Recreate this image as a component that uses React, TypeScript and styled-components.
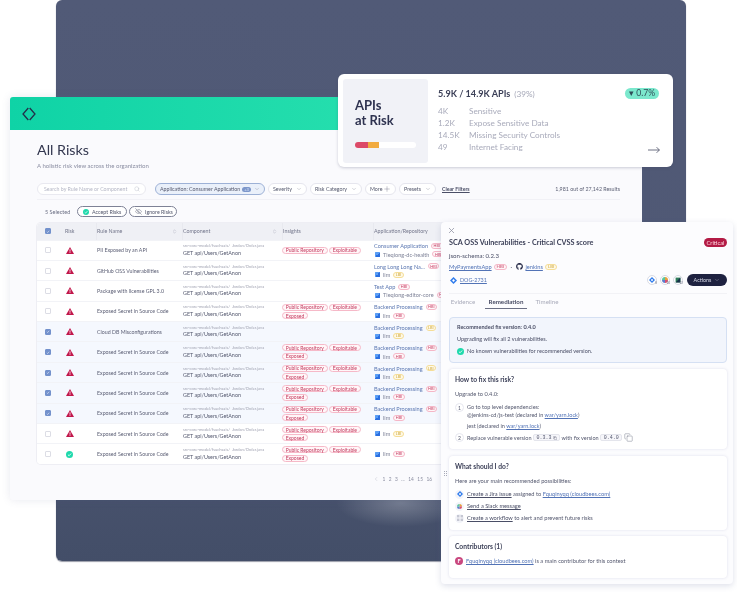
import styled, { createGlobalStyle } from "styled-components";
import { ChevronDown, ChevronLeft, ChevronsUpDown, Copy, EyeOff, Plus, Search, X } from "lucide-react";
import { FaGithub } from "react-icons/fa";

// style
const GlobalStyle = createGlobalStyle`
  html, body { margin: 0; padding: 0; background: #fff; }
  body { font-family: "Lato", "Liberation Sans", sans-serif; color: #3a3e55; }
  * { box-sizing: border-box; }
`;
const Canvas = styled.div`
  position: relative;
  width: 737px;
  height: 592px;
  overflow: hidden;
  background: #fff;
  filter: blur(0.3px);
`;
const Backdrop = styled.div`
  position: absolute;
  left: 56px;
  top: 0;
  width: 630px;
  height: 561px;
  border-radius: 6px;
  background:
    radial-gradient(ellipse 65px 24px at 345px 503px, rgba(255, 255, 255, 0.25), rgba(255, 255, 255, 0)),
    linear-gradient(180deg, #515a77 0%, #4f5874 60%, #434e68 100%);
  box-shadow: 0 1px 1px rgba(50, 55, 80, 0.5);
`;
const RisksWindow = styled.section`
  position: absolute;
  left: 10px;
  top: 97px;
  width: 632px;
  height: 403px;
  background: #fafafd;
  border-radius: 3px;
  box-shadow: 0 0 8px rgba(90, 100, 140, 0.14);
  overflow: hidden;
`;
const TopBand = styled.header`
  height: 33px;
  display: flex;
  align-items: center;
  padding-left: 12px;
  background: linear-gradient(90deg, #0fd3a6 0%, #38e8b4 100%);
`;
const RisksBody = styled.div`
  padding: 0 22px 0 27px;
`;
const PageTitle = styled.h1`
  margin: 10px 0 0;
  font-size: 14.3px;
  line-height: 20px;
  font-weight: 400;
  color: #33374f;
`;
const PageSub = styled.p`
  margin: 2px 0 0;
  font-size: 6.05px;
  line-height: 8px;
  color: #8c8fa3;
`;
const FilterRow = styled.div`
  display: flex;
  align-items: center;
  gap: 3px;
  margin-top: 13px;
  padding-bottom: 4px;
  border-bottom: 1px solid #f1f1f6;
  height: 17px;
`;
const SearchBox = styled.div`
  width: 109px;
  height: 12px;
  margin-right: 6px;
  padding: 0 5px 0 6px;
  display: flex;
  align-items: center;
  justify-content: space-between;
  border: 1px solid #e9e9f0;
  border-radius: 6px;
  background: #fff;
  font-size: 5.25px;
  color: #b4b6c5;
`;
const Chip = styled.div<{ $active?: boolean; $w: number }>`
  width: ${(p) => p.$w}px;
  height: 12px;
  padding: 0 4px 0 4px;
  display: flex;
  align-items: center;
  justify-content: space-between;
  border-radius: 6px;
  border: 1px solid ${(p) => (p.$active ? "#9db1d6" : "#e6e6ee")};
  background: ${(p) => (p.$active ? "#eaf0fa" : "#fff")};
  font-size: 5.3px;
  color: #55596e;
  white-space: nowrap;
`;
const CountPill = styled.span`
  padding: 0 2px;
  margin-left: 2px;
  border-radius: 3px;
  background: #7d97cb;
  color: #dfe8f7;
  font-size: 4px;
  line-height: 5px;
`;
const ClearLink = styled.a`
  margin-left: 3px;
  font-size: 5.2px;
  font-weight: 700;
  color: #4a4e66;
  text-decoration: underline;
`;
const ResultCount = styled.span`
  margin-left: auto;
  font-size: 5.3px;
  color: #5b5f74;
`;
const SelectionRow = styled.div`
  display: flex;
  align-items: center;
  height: 11px;
  margin-top: 6px;
  padding-left: 8px;
  gap: 2px;
`;
const SelectedLabel = styled.span`
  width: 30px;
  font-size: 5.5px;
  color: #6b6f84;
`;
const ActionChip = styled.div<{ $w: number }>`
  width: ${(p) => p.$w}px;
  height: 11px;
  display: flex;
  align-items: center;
  gap: 3px;
  padding-left: 5px;
  border: 1px solid #7e8296;
  border-radius: 6px;
  font-size: 5.3px;
  color: #53576d;
  background: #fff;
`;
const Table = styled.div`
  margin-top: 5.5px;
  border-radius: 4px;
  box-shadow: 0 0 0 1px #eeeef4;
  background: #fff;
  overflow: hidden;
`;
const HeaderRow = styled.div`
  display: grid;
  grid-template-columns: 28px 32px 86px 100px 91px 1fr;
  align-items: center;
  height: 17px;
  background: #eff0f5;
  border-radius: 4px 4px 0 0;
  font-size: 5.3px;
  color: #74778c;
`;
const HeaderCell = styled.div<{ $sep?: boolean }>`
  display: flex;
  align-items: center;
  justify-content: space-between;
  height: 100%;
  padding: 0 5px 0 0;
  ${(p) => p.$sep && "border-right: 1px solid #e8e9ef;"}
`;
const Row = styled.div<{ $checked: boolean }>`
  display: grid;
  grid-template-columns: 28px 32px 86px 100px 91px 1fr;
  align-items: center;
  height: 20.4px;
  border-top: 1px solid #f2f3f7;
  background: ${(p) => (p.$checked ? "#f5f8fe" : "#fff")};
`;
const BoxCell = styled.div`
  display: flex;
  padding-left: 8px;
`;
const RiskCell = styled.div`
  display: flex;
  padding-left: 1px;
`;
const CheckBox = styled.span<{ $checked: boolean }>`
  width: 6px;
  height: 6px;
  border-radius: 1px;
  display: flex;
  align-items: center;
  justify-content: center;
  border: 1px solid ${(p) => (p.$checked ? "#7391cc" : "#dcdde5")};
  background: ${(p) => (p.$checked ? "#7391cc" : "#fff")};
`;
const RuleName = styled.div`
  font-size: 5.25px;
  color: #5d6076;
  white-space: nowrap;
`;
const ComponentPath = styled.div`
  font-size: 4.1px;
  line-height: 6.5px;
  color: #a2a4b3;
  white-space: nowrap;
`;
const ComponentApi = styled.div`
  font-size: 5.4px;
  line-height: 7.5px;
  color: #54586e;
`;
const TagWrap = styled.div`
  display: flex;
  flex-wrap: wrap;
  gap: 1.4px;
  margin-left: -1px;
  padding-right: 8px;
`;
const Tag = styled.span`
  height: 7px;
  padding: 0 2.7px;
  display: flex;
  align-items: center;
  border: 0.7px solid #f6b9c8;
  border-radius: 4px;
  background: #fff6f8;
  color: #c43a5e;
  font-size: 5px;
  white-space: nowrap;
`;
const AppCell = styled.div`
  display: flex;
  flex-direction: column;
  gap: 1px;
  min-width: 0;
`;
const AppLine = styled.div`
  display: flex;
  align-items: center;
  gap: 3px;
  font-size: 5.6px;
  line-height: 7.5px;
  color: #5c78b2;
  white-space: nowrap;
`;
const RepoLine = styled(AppLine)`
  padding-left: 1px;
  color: #7f8398;
`;
const RepoIcon = styled.span`
  width: 5px;
  height: 5px;
  border-radius: 0.5px;
  background: linear-gradient(135deg, #5a9df4 50%, #2b6fe0 50%);
`;
const Level = styled.span<{ $low?: boolean; $size?: number }>`
  height: 6px;
  padding: 0 1.5px;
  display: flex;
  align-items: center;
  border-radius: 3px;
  border: 0.7px solid ${(p) => (p.$low ? "#f5dd97" : "#f5b7c7")};
  background: ${(p) => (p.$low ? "#fff9e6" : "#fff6f8")};
  color: ${(p) => (p.$low ? "#cda63a" : "#c43a5e")};
  font-size: ${(p) => p.$size ?? 3.8}px;
`;
const Pager = styled.div`
  display: flex;
  justify-content: flex-end;
  gap: 3.5px;
  align-items: center;
  height: 10px;
  margin-top: 10px;
  padding-right: 188px;
  font-size: 4.8px;
  color: #8a8da0;
`;

const ApiCard = styled.section`
  position: absolute;
  left: 338px;
  top: 74px;
  width: 335px;
  height: 93px;
  padding: 5px;
  display: flex;
  gap: 10px;
  border-radius: 6px;
  background: #fff;
  box-shadow: 0 1px 3px rgba(60, 65, 95, 0.25);
`;
const ApiTile = styled.div`
  width: 85px;
  height: 84px;
  padding: 19px 12px 0;
  display: flex;
  flex-direction: column;
  border-radius: 3px;
  background: #f1f2f7;
`;
const ApiTileTitle = styled.div`
  font-size: 13px;
  line-height: 15px;
  font-weight: 700;
  color: #2f3350;
`;
const RiskBar = styled.div`
  display: flex;
  height: 6px;
  width: 61px;
  margin-top: 14px;
  border-radius: 3px;
  overflow: hidden;
  background: #fff;
`;
const RiskPart = styled.span<{ $c: string; $w: number }>`
  width: ${(p) => p.$w}px;
  background: ${(p) => p.$c};
`;
const ApiMain = styled.div`
  flex: 1;
  padding: 8px 9px 0 0;
  position: relative;
`;
const ApiHead = styled.div`
  display: flex;
  align-items: center;
  justify-content: space-between;
  height: 12px;
`;
const ApiHeadline = styled.div`
  font-size: 9.1px;
  font-weight: 700;
  color: #3b3f57;
  b {
    margin-left: 4px;
    font-weight: 400;
    color: #a6a8b8;
    font-size: 8.2px;
  }
`;
const TrendBadge = styled.div`
  width: 34px;
  display: flex;
  align-items: center;
  justify-content: center;
  gap: 2px;
  height: 11px;
  border-radius: 5.5px;
  background: #7be8cd;
  color: #2f4d58;
  font-size: 8.6px;
`;
const ApiList = styled.div`
  margin-top: 6.5px;
  display: grid;
  grid-template-columns: 31px 1fr;
  grid-auto-rows: 11.8px;
  align-items: center;
  font-size: 8.2px;
  color: #a9abbb;
`;
const ApiArrow = styled.div`
  position: absolute;
  right: 8px;
  bottom: 8px;
  display: flex;
`;

const DetailPanel = styled.aside`
  position: absolute;
  left: 441px;
  top: 222px;
  width: 292px;
  height: 362px;
  padding: 3px 6px 0 8px;
  border-radius: 4px;
  background: #fcfcfe;
  box-shadow: 0 2px 6px rgba(90, 100, 150, 0.2);
`;
const CloseButton = styled.div`
  display: flex;
  margin-left: -2px;
  color: #8f91a2;
  height: 11px;
  align-items: center;
`;
const TitleRow = styled.div`
  display: flex;
  align-items: center;
  justify-content: space-between;
  height: 11px;
  margin-top: 1px;
`;
const DetailTitle = styled.h2`
  margin: 0;
  font-size: 7.25px;
  font-weight: 700;
  color: #3b3f57;
`;
const Severity = styled.span`
  height: 9px;
  width: 23px;
  display: flex;
  align-items: center;
  justify-content: center;
  border-radius: 4.5px;
  background: #b31b45;
  color: #ffd8e2;
  font-size: 5.8px;
`;
const Meta = styled.div`
  margin-top: 2.5px;
  font-size: 6.1px;
  line-height: 9px;
  color: #4a4e66;
`;
const LinkRow = styled.div`
  margin-top: 2px;
  display: flex;
  align-items: center;
  gap: 2.5px;
  height: 10px;
  font-size: 5.7px;
  color: #4a4e66;
`;
const TextLink = styled.a`
  color: #5273b6;
  text-decoration: underline;
`;
const IssueRow = styled.div`
  display: flex;
  align-items: center;
  justify-content: space-between;
  height: 13px;
  margin-top: 2px;
`;
const IssueLink = styled.div`
  display: flex;
  align-items: center;
  gap: 3px;
  padding-left: 1px;
  font-size: 5.4px;
`;
const IssueTools = styled.div`
  display: flex;
  align-items: center;
  gap: 3px;
`;
const ToolBadge = styled.span`
  position: relative;
  width: 10px;
  height: 10px;
  display: flex;
  align-items: center;
  justify-content: center;
  border-radius: 50%;
  border: 0.7px solid #d9dbe4;
  background: #fff;
`;
const ToolCount = styled.span`
  position: absolute;
  right: -1px;
  bottom: -1px;
  font-size: 3px;
  line-height: 3px;
  color: #6b6f84;
`;
const ActionsButton = styled.div`
  width: 40px;
  height: 12px;
  margin-left: 1px;
  display: flex;
  align-items: center;
  justify-content: center;
  gap: 3px;
  border-radius: 6px;
  background: #1e2240;
  color: #d9dbe8;
  font-size: 5.4px;
`;
const Tabs = styled.nav`
  margin-top: 6px;
  padding-top: 3px;
  display: flex;
  border-top: 1px solid #f2f2f6;
  height: 16px;
`;
const TabItem = styled.div<{ $active?: boolean; $w: number }>`
  width: ${(p) => p.$w}px;
  margin-right: 8px;
  text-align: center;
  font-size: 6.2px;
  line-height: 10px;
  height: 12px;
  font-weight: ${(p) => (p.$active ? 700 : 400)};
  color: ${(p) => (p.$active ? "#4a4e66" : "#a9abba")};
  border-bottom: ${(p) => (p.$active ? "1px solid #6b6f84" : "0")};
`;
const FixBox = styled.div`
  height: 46px;
  margin-top: 8px;
  padding: 6px 7px;
  border: 1px solid #d5e0f3;
  border-radius: 4px;
  background: #f2f5fc;
  font-size: 5.55px;
  color: #4a4e66;
  display: flex;
  flex-direction: column;
  gap: 5.2px;
  line-height: 7px;
`;
const FixHead = styled.div`
  font-weight: 700;
`;
const FixClean = styled.div`
  display: flex;
  align-items: center;
  gap: 3px;
`;
const Card = styled.div<{ $h: number }>`
  height: ${(p) => p.$h}px;
  margin-top: 6.5px;
  padding: 6px 6px;
  border-radius: 4px;
  background: #fff;
  box-shadow: 0 0 3px rgba(110, 120, 170, 0.22);
  font-size: 5.7px;
  line-height: 8px;
  color: #54586e;
`;
const CardTitle = styled.h3`
  margin: 0 0 6px;
  font-size: 6.7px;
  line-height: 9px;
  font-weight: 700;
  color: #3b3f57;
`;
const Steps = styled.div`
  margin-top: 5px;
  display: grid;
  grid-template-columns: 12px 1fr;
  row-gap: 3px;
`;
const StepNum = styled.span`
  width: 9px;
  height: 9px;
  display: flex;
  align-items: center;
  justify-content: center;
  border-radius: 50%;
  border: 0.6px solid #e6e7ef;
  font-size: 5px;
`;
const StepText = styled.div`
  font-size: 5.55px;
  line-height: 8.4px;
`;
const StepLine = styled.div<{ $gap?: boolean }>`
  white-space: nowrap;
  ${(p) => p.$gap && "margin-top: 2px;"}
`;
const VersionLine = styled.div`
  display: flex;
  align-items: center;
  gap: 1.5px;
  white-space: nowrap;
  color: #54586e;
`;
const Code = styled.code`
  display: flex;
  align-items: center;
  gap: 1px;
  height: 7px;
  padding: 0 2.5px;
  border: 0.6px solid #e4e5ec;
  border-radius: 2px;
  background: #f6f6fa;
  font-family: "Liberation Mono", monospace;
  font-size: 5px;
`;
const TodoList = styled.div`
  margin-top: 3.5px;
`;
const TodoRow = styled.div`
  display: flex;
  align-items: center;
  gap: 3px;
  height: 12px;
`;
const ContributorRow = styled(TodoRow)`
  margin-top: -2px;
`;
const TodoIcon = styled.span`
  width: 9px;
  height: 9px;
  display: flex;
  align-items: center;
  justify-content: center;
  border-radius: 50%;
  background: #f3f4f9;
`;
const PlainLink = styled.a`
  color: #4a4e66;
  text-decoration: underline;
`;
const Avatar = styled.span`
  width: 8px;
  height: 8px;
  display: flex;
  align-items: center;
  justify-content: center;
  border-radius: 50%;
  background: #c9487f;
  color: #fff;
  font-size: 5.5px;
  font-weight: 700;
`;
const Handle = styled.div`
  position: absolute;
  left: 3px;
  top: 249px;
  display: grid;
  grid-template-columns: 1px 1px;
  gap: 1px;
  span {
    width: 1px;
    height: 1px;
    background: #a7a9b8;
  }
`;

// content
type RowData = {
  rule: string;
  checked?: boolean;
  ok?: boolean;
  tags?: number;
  app?: string;
  appLow?: boolean;
  repo?: string;
  repoLow?: boolean;
};

const secret = "Exposed Secret in Source Code";
const backend = "Backend Processing";
const rows: RowData[] = [
  { rule: "PII Exposed by an API", tags: 2, app: "Consumer Application", repo: "Tieqiong-dc-health" },
  { rule: "GitHub OSS Vulnerabilities", tags: 0, app: "Long Long Long Na...", repo: "lim", repoLow: true },
  { rule: "Package with license GPL 3.0", tags: 0, app: "Test App", repo: "Tieqiong-editor-core" },
  { rule: secret, tags: 3, app: backend, repo: "lim" },
  { rule: "Cloud DB Misconfigurations", tags: 0, checked: true, app: backend, appLow: true, repo: "lim", repoLow: true },
  { rule: secret, tags: 3, checked: true, app: backend, repo: "lim" },
  { rule: secret, tags: 3, checked: true, app: backend, appLow: true, repo: "lim", repoLow: true },
  { rule: secret, tags: 3, checked: true, app: backend, repo: "lim" },
  { rule: secret, tags: 3, checked: true, app: backend, repo: "lim" },
  { rule: secret, tags: 3, repo: "lim", repoLow: true },
  { rule: secret, tags: 3, ok: true, repo: "lim" },
];
const tagNames = ["Public Repository", "Exploitable", "Exposed"];

const Logo = () => (
  <svg width="14" height="14" viewBox="0 0 14 14" fill="none">
    <path d="M6.3 1 1 7l5.3 6" stroke="#23304a" strokeWidth="1.3" />
    <path d="M7.7 1 13 7l-5.3 6" stroke="#23304a" strokeWidth="1.3" />
  </svg>
);
const Warning = () => (
  <svg width="8" height="7" viewBox="0 0 8 7">
    <path d="M4 0 8 7H0z" fill="#c1174b" />
    <rect x="3.6" y="2.3" width="0.8" height="2.4" fill="#fff" />
    <rect x="3.6" y="5.2" width="0.8" height="0.8" fill="#fff" />
  </svg>
);
const Tick = ({ size = 7, bg = "#1fd9ac" }: { size?: number; bg?: string }) => (
  <svg width={size} height={size} viewBox="0 0 10 10">
    <circle cx="5" cy="5" r="5" fill={bg} />
    <path d="M2.8 5.3 4.4 6.8 7.3 3.6" stroke="#fff" strokeWidth="1.2" fill="none" />
  </svg>
);
const BoxTick = () => (
  <svg width="5" height="5" viewBox="0 0 10 10">
    <path d="M2 5.5 4.2 7.6 8 3" stroke="#e8eefa" strokeWidth="1.5" fill="none" />
  </svg>
);
const LongArrow = () => (
  <svg width="12" height="8" viewBox="0 0 12 8" fill="none" stroke="#4a4e66" strokeWidth="0.8">
    <path d="M0 4h11.4" />
    <path d="M8.6 1.2 11.4 4 8.6 6.8" />
  </svg>
);
const JiraMark = ({ size = 7 }: { size?: number }) => (
  <svg width={size} height={size} viewBox="0 0 10 10">
    <path d="M5 0 10 5 5 10 0 5z" fill="#2f7bec" />
    <path d="M5 3 7 5 5 7 3 5z" fill="#fff" />
  </svg>
);
const SlackMark = ({ size = 6 }: { size?: number }) => (
  <svg width={size} height={size} viewBox="0 0 10 10">
    <path d="M5 5V0a5 5 0 0 1 5 5z" fill="#e8a23c" />
    <path d="M5 5h5a5 5 0 0 1-5 5z" fill="#d9506f" />
    <path d="M5 5v5a5 5 0 0 1-5-5z" fill="#5d7fd0" />
    <path d="M5 5H0a5 5 0 0 1 5-5z" fill="#59c6a0" />
  </svg>
);
const FlowMark = () => (
  <svg width="6" height="6" viewBox="0 0 10 10" fill="#c5c7d3">
    <rect x="0" y="0" width="4" height="4" />
    <rect x="6" y="0" width="4" height="4" />
    <rect x="0" y="6" width="4" height="4" />
    <rect x="6" y="6" width="4" height="4" />
  </svg>
);
const SheetMark = () => (
  <svg width="6" height="6" viewBox="0 0 10 10">
    <path d="M1 1h8v8H1z" fill="#2f7d5a" />
    <path d="M1 9 9 1v8z" fill="#16324a" />
  </svg>
);

const App = () => {
  return (
    <>
      <GlobalStyle />
      <Canvas>
        <Backdrop />
        <RisksWindow>
          <TopBand>
            <Logo />
          </TopBand>
          <RisksBody>
            <PageTitle>All Risks</PageTitle>
            <PageSub>A holistic risk view across the organization</PageSub>
            <FilterRow>
              <SearchBox>
                Search by Rule Name or Component
                <Search size={6} strokeWidth={1.5} />
              </SearchBox>
              <Chip $active $w={110}>
                <span>
                  Application: Consumer Application<CountPill>+3</CountPill>
                </span>
                <ChevronDown size={6} strokeWidth={1} />
              </Chip>
              <Chip $w={39}>
                Severity
                <ChevronDown size={6} strokeWidth={1} />
              </Chip>
              <Chip $w={52}>
                Risk Category
                <ChevronDown size={6} strokeWidth={1} />
              </Chip>
              <Chip $w={31}>
                More
                <Plus size={8} strokeWidth={1} />
              </Chip>
              <Chip $w={37}>
                Presets
                <ChevronDown size={6} strokeWidth={1} />
              </Chip>
              <ClearLink>Clear Filters</ClearLink>
              <ResultCount>1,981 out of 27,142 Results</ResultCount>
            </FilterRow>
            <SelectionRow>
              <SelectedLabel>5 Selected</SelectedLabel>
              <ActionChip $w={50}>
                <Tick size={6} />
                Accept Risks
              </ActionChip>
              <ActionChip $w={48}>
                <EyeOff size={7} strokeWidth={1.5} />
                Ignore Risks
              </ActionChip>
            </SelectionRow>
            <Table>
              <HeaderRow>
                <BoxCell>
                  <CheckBox $checked>
                    <BoxTick />
                  </CheckBox>
                </BoxCell>
                <HeaderCell $sep>Risk</HeaderCell>
                <HeaderCell $sep>
                  Rule Name
                  <ChevronsUpDown size={5} strokeWidth={1.2} />
                </HeaderCell>
                <HeaderCell $sep>
                  Component
                  <ChevronsUpDown size={5} strokeWidth={1.2} />
                </HeaderCell>
                <HeaderCell $sep>Insights</HeaderCell>
                <HeaderCell>Application/Repository</HeaderCell>
              </HeaderRow>
              {rows.map((row, i) => (
                <Row key={i} $checked={!!row.checked}>
                  <BoxCell>
                    <CheckBox $checked={!!row.checked}>{row.checked && <BoxTick />}</CheckBox>
                  </BoxCell>
                  <RiskCell>{row.ok ? <Tick /> : <Warning />}</RiskCell>
                  <RuleName>{row.rule}</RuleName>
                  <div>
                    <ComponentPath>src-core-model/fsuchsais/_Jordan/Order.java</ComponentPath>
                    <ComponentApi>GET api/Users/GetAnon</ComponentApi>
                  </div>
                  <TagWrap>
                    {tagNames.slice(0, row.tags).map((t) => (
                      <Tag key={t}>{t}</Tag>
                    ))}
                  </TagWrap>
                  <AppCell>
                    {row.app && (
                      <AppLine>
                        {row.app}
                        <Level $low={row.appLow}>{row.appLow ? "LBI" : "HBI"}</Level>
                      </AppLine>
                    )}
                    <RepoLine>
                      <RepoIcon />
                      {row.repo}
                      <Level $low={row.repoLow}>{row.repoLow ? "LBI" : "HBI"}</Level>
                    </RepoLine>
                  </AppCell>
                </Row>
              ))}
            </Table>
            <Pager>
              <ChevronLeft size={6} strokeWidth={1} />
              <span>1</span>
              <span>2</span>
              <span>3</span>
              <span>...</span>
              <span>14</span>
              <span>15</span>
              <span>16</span>
            </Pager>
          </RisksBody>
        </RisksWindow>

        <ApiCard>
          <ApiTile>
            <ApiTileTitle>
              APIs
              <br />
              at Risk
            </ApiTileTitle>
            <RiskBar>
              <RiskPart $c="#dc4a68" $w={13} />
              <RiskPart $c="#f2ab3f" $w={11} />
            </RiskBar>
          </ApiTile>
          <ApiMain>
            <ApiHead>
              <ApiHeadline>
                5.9K / 14.9K APIs<b>(39%)</b>
              </ApiHeadline>
              <TrendBadge>▾ 0.7%</TrendBadge>
            </ApiHead>
            <ApiList>
              <span>4K</span>
              <span>Sensitive</span>
              <span>1.2K</span>
              <span>Expose Sensitive Data</span>
              <span>14.5K</span>
              <span>Missing Security Controls</span>
              <span>49</span>
              <span>Internet Facing</span>
            </ApiList>
            <ApiArrow>
              <LongArrow />
            </ApiArrow>
          </ApiMain>
        </ApiCard>

        <DetailPanel>
          <Handle>
            <span /><span /><span /><span /><span /><span />
          </Handle>
          <CloseButton>
            <X size={9} strokeWidth={2} />
          </CloseButton>
          <TitleRow>
            <DetailTitle>SCA OSS Vulnerabilities - Critical CVSS score</DetailTitle>
            <Severity>Critical</Severity>
          </TitleRow>
          <Meta>json-schema: 0.2.3</Meta>
          <LinkRow>
            <TextLink>MyPaymentsApp</TextLink>
            <Level $size={4.4}>HBI</Level>
            <span>&nbsp;·&nbsp;</span>
            <FaGithub size={7} color="#1e2240" />
            <TextLink>jenkins</TextLink>
            <Level $low $size={4.4}>LBI</Level>
          </LinkRow>
          <IssueRow>
            <IssueLink>
              <JiraMark />
              <TextLink>DOG-2731</TextLink>
            </IssueLink>
            <IssueTools>
              <ToolBadge>
                <JiraMark size={6} />
                <ToolCount>8</ToolCount>
              </ToolBadge>
              <ToolBadge>
                <SlackMark />
                <ToolCount>10</ToolCount>
              </ToolBadge>
              <ToolBadge>
                <SheetMark />
                <ToolCount>12</ToolCount>
              </ToolBadge>
              <ActionsButton>
                Actions
                <ChevronDown size={6} strokeWidth={1.2} />
              </ActionsButton>
            </IssueTools>
          </IssueRow>
          <Tabs>
            <TabItem $w={28}>Evidence</TabItem>
            <TabItem $active $w={42}>Remediation</TabItem>
            <TabItem $w={24}>Timeline</TabItem>
          </Tabs>
          <FixBox>
            <FixHead>Recommended fix version: 0.4.0</FixHead>
            <div>Upgrading will fix all 2 vulnerabilities.</div>
            <FixClean>
              <Tick size={7} />
              No known vulnerabilities for recommended version.
            </FixClean>
          </FixBox>
          <Card $h={80}>
            <CardTitle>How to fix this risk?</CardTitle>
            <div>Upgrade to 0.4.0:</div>
            <Steps>
              <StepNum>1</StepNum>
              <StepText>
                <StepLine>Go to top level dependencies:</StepLine>
                <StepLine>
                  @jenkins-cd/js-test (declared in <TextLink>war/yarn.lock</TextLink>)
                </StepLine>
                <StepLine $gap>
                  jest (declared in <TextLink>war/yarn.lock</TextLink>)
                </StepLine>
              </StepText>
              <StepNum>2</StepNum>
              <StepText>
                <VersionLine>
                  Replace vulnerable version
                  <Code>
                    0.3.3
                    <Copy size={4} strokeWidth={2} />
                  </Code>
                  with fix version
                  <Code>0.4.0</Code>
                  <Copy size={9} strokeWidth={1} />
                </VersionLine>
              </StepText>
            </Steps>
          </Card>
          <Card $h={74}>
            <CardTitle>What should I do?</CardTitle>
            <div>Here are your main recommended possibilities:</div>
            <TodoList>
              <TodoRow>
                <TodoIcon>
                  <JiraMark size={6} />
                </TodoIcon>
                <span>
                  <PlainLink>Create a Jira issue</PlainLink> assigned to <TextLink>Fquqinyqq (cloudbees.com)</TextLink>
                </span>
              </TodoRow>
              <TodoRow>
                <TodoIcon>
                  <SlackMark size={5} />
                </TodoIcon>
                <PlainLink>Send a Slack message</PlainLink>
              </TodoRow>
              <TodoRow>
                <TodoIcon>
                  <FlowMark />
                </TodoIcon>
                <span>
                  <PlainLink>Create a workflow</PlainLink> to alert and prevent future risks
                </span>
              </TodoRow>
            </TodoList>
          </Card>
          <Card $h={42}>
            <CardTitle>Contributors (1)</CardTitle>
            <ContributorRow>
              <Avatar>F</Avatar>
              <span>
                <TextLink>Fquqinyqq (cloudbees.com)</TextLink> is a main contributor for this context
              </span>
            </ContributorRow>
          </Card>
        </DetailPanel>
      </Canvas>
    </>
  );
};

export default App;
